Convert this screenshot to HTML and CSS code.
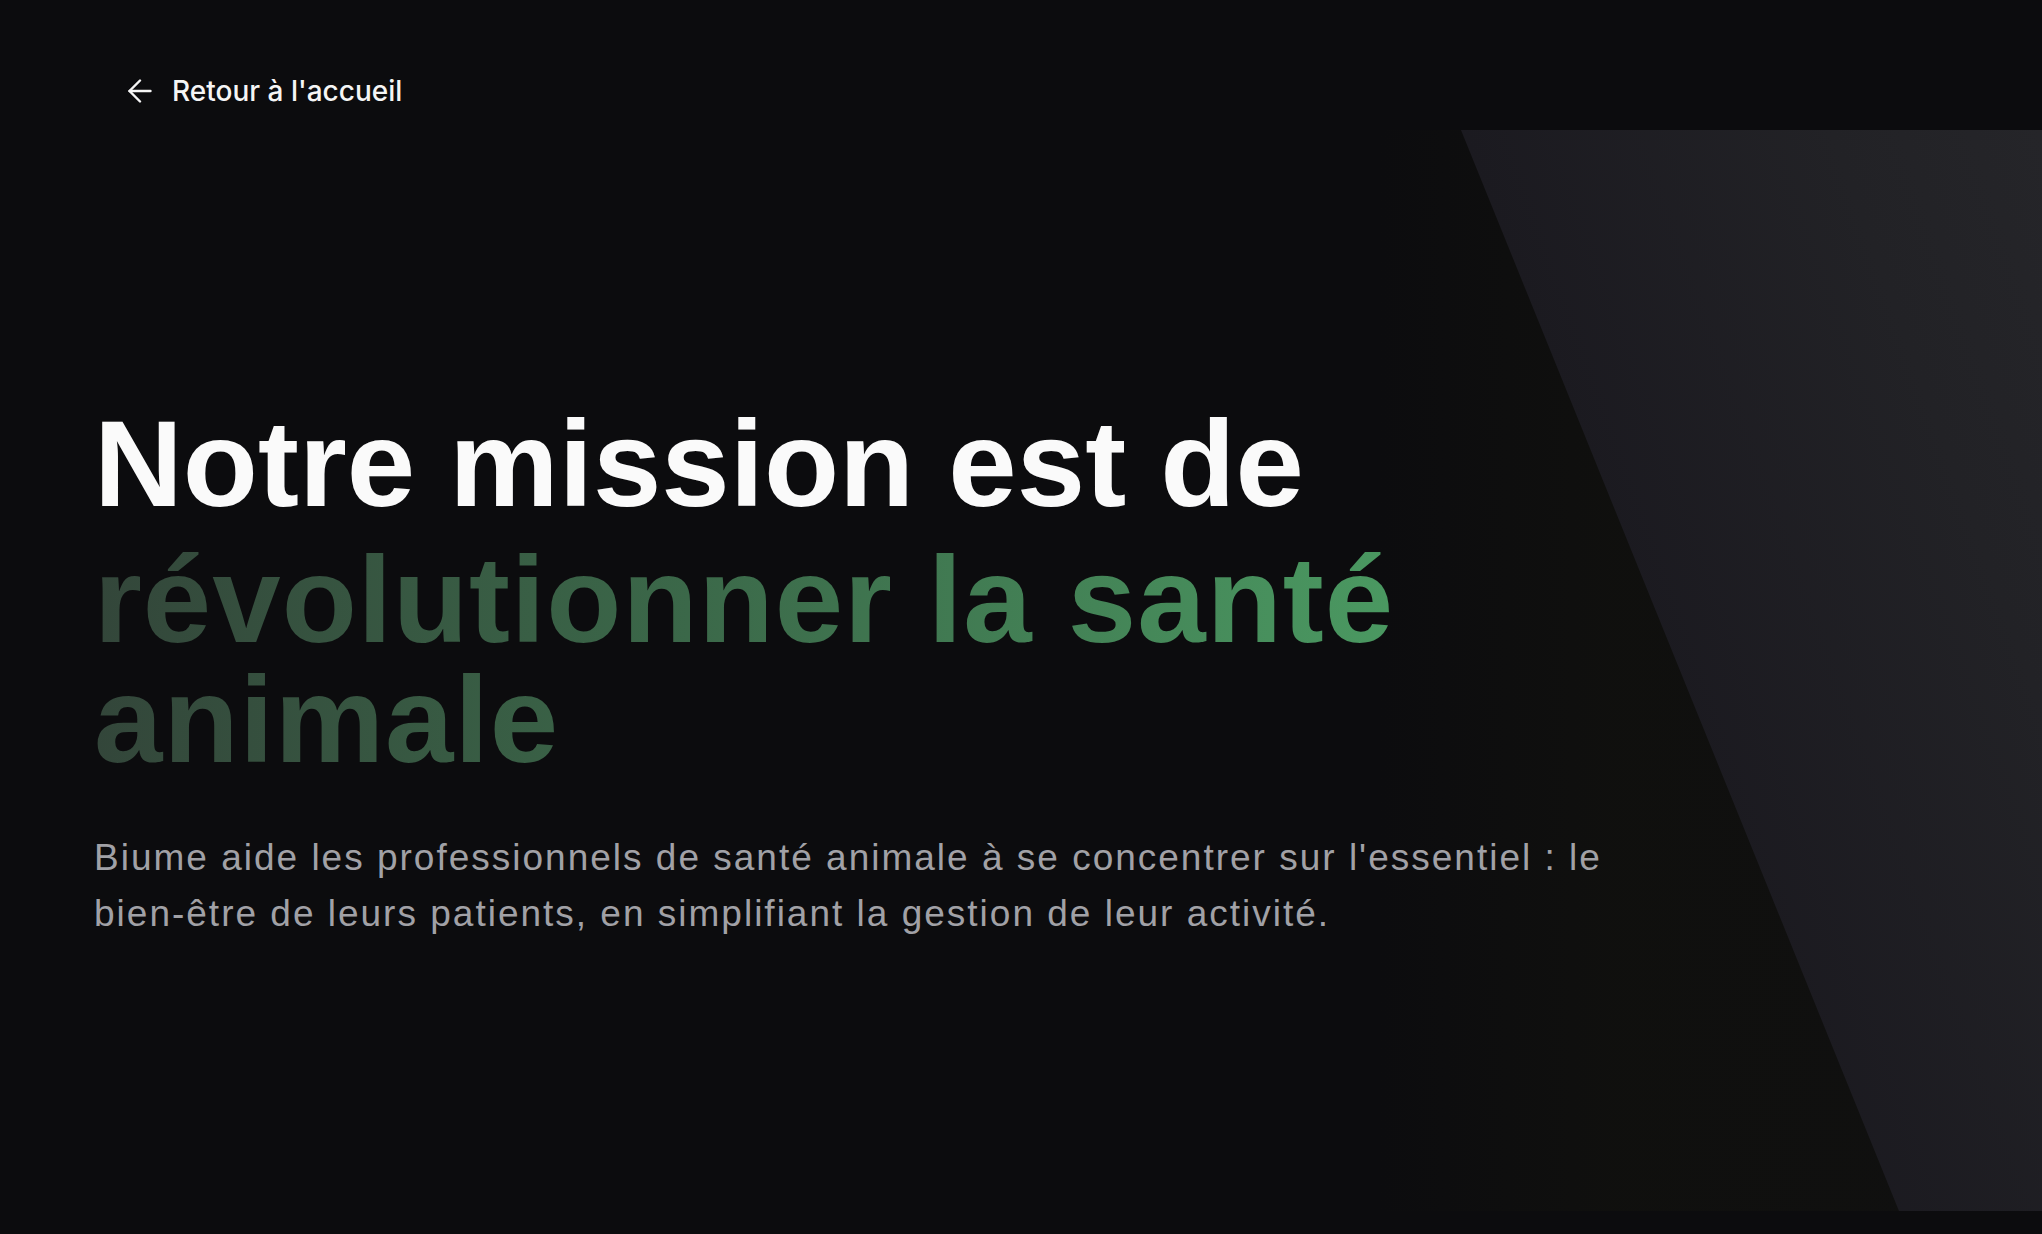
FILE: index.html
```html
<!DOCTYPE html>
<html lang="fr">
<head>
<meta charset="utf-8">
<title>Notre mission</title>
<link rel="stylesheet" href="styles.css">
</head>
<body>
<div class="page">
  <div class="deco" aria-hidden="true"><div class="deco-panel"></div></div>
  <nav class="nav">
    <a class="back" href="#">
      <svg class="back-icon" width="24" height="24" viewBox="4 4 16 16" fill="none" stroke="currentColor" stroke-width="1.6" stroke-linecap="round" stroke-linejoin="round"><path d="m12 19-7-7 7-7"/><path d="M19 12H5"/></svg>
      <span>Retour à l'accueil</span>
    </a>
  </nav>
  <main class="hero">
    <h1 class="title">
      <span class="title-line">Notre mission est de</span>
      <span class="title-accent">révolutionner la santé animale</span>
    </h1>
    <p class="lead">Biume aide les professionnels de santé animale à se concentrer sur l'essentiel : le <span class="nowrap">bien-être</span> de leurs patients, en simplifiant la gestion de leur activité.</p>
  </main>
</div>
</body>
</html>
```

FILE: styles.css
```css
* { box-sizing: border-box; }
html, body { margin: 0; padding: 0; background: #0c0c0e; }
body { font-family: "Liberation Sans", Arial, sans-serif; color: #fafafa; }

.page {
  position: relative;
  min-height: 1234px;
  overflow: hidden;
}

.deco {
  position: absolute;
  left: 1380px;
  right: 0;
  top: 130px;
  height: 1081px;
  background: linear-gradient(to right, rgba(16,16,14,0) 0%, rgba(16,16,14,0.9) 35%, #101010 100%);
}
.deco-panel {
  position: absolute;
  inset: 0;
  clip-path: polygon(81px 0, 100% 0, 100% 100%, 519px 100%);
  background: linear-gradient(70deg, #16151a 0%, #1b1a20 45%, #222226 80%, #252529 100%);
}

.nav {
  position: relative;
  padding: 70px 0 0 128px;
  height: 112px;
}
.back {
  display: inline-flex;
  align-items: center;
  gap: 20px;
  color: #f5f5f5;
  text-decoration: none;
  font-family: Inter, "Liberation Sans", sans-serif;
  font-weight: 500;
  font-size: 28px;
  line-height: 42px;
}
.back-icon { display: block; }

.hero {
  position: relative;
  padding: 284px 0 0 94px;
}
.title {
  margin: 0;
  font-weight: 700;
  font-size: 123px;
  letter-spacing: 0;
  width: 1400px;
}
.title-line {
  display: block;
  line-height: 136px;
  color: #fafafa;
}
.title-accent {
  display: block;
  margin-top: 8px;
  line-height: 120px;
  letter-spacing: 1px;
  width: 1320px;
  background: linear-gradient(to right, #33463a 0%, #3b6849 45%, #4b9a62 100%);
  -webkit-background-clip: text;
  background-clip: text;
  color: transparent;
}
.lead {
  margin: 50px 0 0;
  width: 1620px;
  font-size: 37px;
  letter-spacing: 2px;
  line-height: 56px;
  color: #a1a1a6;
}
.nowrap { white-space: nowrap; }
```
